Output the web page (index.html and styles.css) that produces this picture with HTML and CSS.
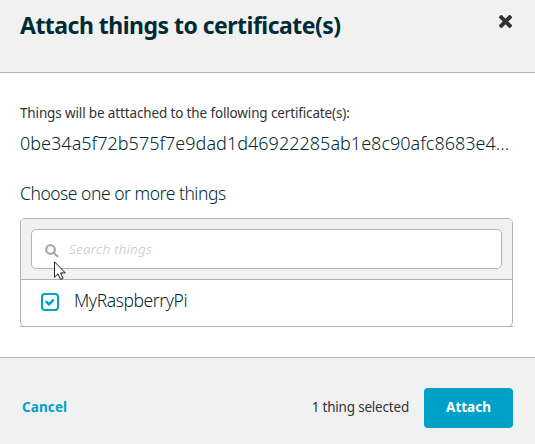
FILE: index.html
```html
<!DOCTYPE html>
<html lang="en">
<head>
<meta charset="utf-8">
<title>Attach things to certificate(s)</title>
<link rel="stylesheet" href="styles.css">
</head>
<body>
<div class="modal">
  <header class="modal-header">
    <h1 class="title">Attach things to certificate(s)</h1>
    <svg class="close" viewBox="0 0 13 13" width="13" height="13"><path d="M2.3 2.3L10.7 10.7M10.7 2.3L2.3 10.7"/></svg>
  </header>
  <main class="modal-body">
    <p class="info">Things will be atttached to the following certificate(s):</p>
    <p class="hash">0be34a5f72b575f7e9dad1d46922285ab1e8c90afc8683e4...</p>
    <h2 class="choose">Choose one or more things</h2>
    <div class="list">
      <div class="picker">
        <div class="search-bar">
          <div class="search">
            <svg class="search-icon" viewBox="0 0 14 14" width="14" height="14"><circle cx="5.5" cy="5.5" r="4.3"/><path d="M8.8 8.8L12.3 12.3"/></svg>
            <span class="placeholder">Search things</span>
            <svg class="cursor" viewBox="0 0 12 20" width="12" height="20"><path d="M.5 .8V16.2L4 12.8L6.5 18.5L9 17.4L6.7 11.9H11.3Z"/></svg>
          </div>
        </div>
        <div class="row">
          <svg class="checkbox" viewBox="0 0 18 18" width="18" height="18"><rect x="1" y="1" width="16" height="16" rx="3"/><path class="tick" d="M4.7 8.3L8 11.3L12.7 6.6"/></svg>
          <span class="name">MyRaspberryPi</span>
        </div>
      </div>
    </div>
  </main>
  <footer class="modal-footer">
    <span class="cancel">Cancel</span>
    <span class="count">1 thing selected</span>
    <button class="attach">Attach</button>
  </footer>
</div>
</body>
</html>
```
FILE: styles.css
```css
* { box-sizing: border-box; }
body { margin: 0; font-family: "Noto Sans", "Open Sans", sans-serif; color: #002b36; background: #fff; }
.modal { display: flex; flex-direction: column; width: 535px; height: 444px; overflow: hidden; }
.modal-header { display: flex; justify-content: space-between; align-items: flex-start; height: 73px; padding: 8px 23px 0 20px; background: #f1f1f1; border-bottom: 1px solid #b3b3b3; }
.title { margin: 0; font-size: 23px; line-height: 34px; font-weight: 700; white-space: nowrap; letter-spacing: -0.52px; }
.close { margin: 7px 0 0; fill: none; stroke: #333; stroke-width: 4; stroke-linecap: square; overflow: hidden; border-radius: 2px; }
.modal-body { flex: 1; padding: 30px 22px 0 20px; }
.info, .hash, .choose { margin: 0; white-space: nowrap; }
.info { font-size: 13.5px; line-height: 20px; color: #333; letter-spacing: -0.14px; }
.hash { margin-top: 8px; font-size: 18px; line-height: 24px; font-weight: 300; letter-spacing: 0.02px; }
.choose { margin-top: 26px; font-size: 17.5px; line-height: 24px; font-weight: 300; letter-spacing: -0.47px; }
.list { margin-top: 13px; height: 109px; border-bottom: 1px solid #b3b3b3; }
.picker { height: 109px; border: 1px solid #b3b3b3; border-radius: 5px; }
.search-bar { height: 61px; padding: 10px; background: #f1f1f1; border-bottom: 1px solid #b3b3b3; border-radius: 4px 4px 0 0; }
.search { position: relative; display: flex; align-items: center; gap: 10px; height: 40px; padding-left: 13px; background: #fff; border: 1px solid #b3b3b3; border-radius: 5px; }
.search-icon { margin-top: 3px; fill: none; stroke: #aaa; stroke-width: 2.3; stroke-linecap: round; }
.placeholder { font-size: 13.5px; font-style: italic; font-weight: 300; color: #c4c4c4; letter-spacing: 0.28px; }
.cursor { position: absolute; left: 22px; top: 31px; fill: #fff; stroke: #1b1b2b; stroke-width: 1; }
.row { display: flex; height: 46px; padding: 13px 0 0 20px; gap: 15px; }
.checkbox { fill: #fff; stroke: #00a1c9; stroke-width: 2; }
.tick { fill: none; stroke-width: 2.6; }
.name { margin-top: -5px; font-size: 17.5px; line-height: 24px; font-weight: 300; letter-spacing: -0.42px; }
.modal-footer { display: flex; align-items: center; height: 87px; padding: 13px 22px 0 22px; background: #f1f1f1; border-top: 1px solid #b3b3b3; }
.cancel { flex: 1; font-size: 13.5px; line-height: 20px; margin-top: -1px; font-weight: 700; color: #00a1c9; letter-spacing: 0.1px; }
.count { margin: -1px 15px 0 0; font-size: 13.5px; line-height: 20px; color: #333; white-space: nowrap; letter-spacing: -0.2px; }
.attach { width: 89px; height: 40px; padding: 0 0 2px; border: 0; border-radius: 4px; background: #00a1c9; color: #fff; font: 700 13.5px "Noto Sans", sans-serif; }
```
